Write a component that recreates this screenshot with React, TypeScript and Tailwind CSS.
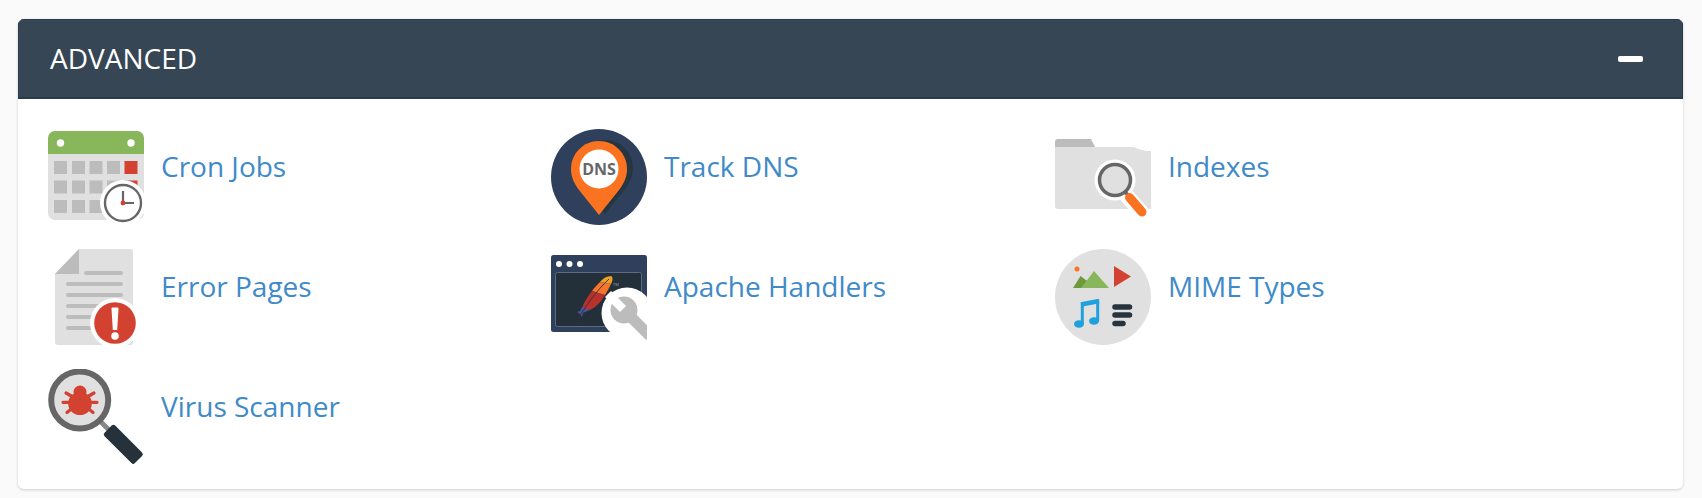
import React from "react";

const Cron = () => (
  <svg width="96" height="96" viewBox="0 0 96 96">
    <path d="M0 25V9a7 7 0 0 1 7-7h82a7 7 0 0 1 7 7v16z" fill="#87b75a" />
    <path d="M0 25h96v59a7 7 0 0 1-7 7H7a7 7 0 0 1-7-7z" fill="#e0e0e0" />
    <circle cx="12.5" cy="14" r="3.7" fill="#fff" />
    <circle cx="83" cy="14" r="3.7" fill="#fff" />
    {[32, 51.5, 71].map((y, r) =>
      [6, 24, 41.5, 59, 76.5].map((x, c) => (
        <rect key={`${r}-${c}`} x={x} y={y} width="13" height="13" fill={c === 4 ? "#d34130" : "#bcbcbc"} />
      ))
    )}
    <circle cx="75" cy="74" r="23" fill="#fff" />
    <circle cx="75" cy="74" r="18" fill="#fff" stroke="#666" strokeWidth="2.4" />
    <path d="M75 62v12h11" fill="none" stroke="#666" strokeWidth="2.2" />
    <circle cx="75" cy="74" r="2.4" fill="#d34130" />
  </svg>
);

const Dns = () => (
  <svg width="96" height="96" viewBox="0 0 96 96">
    <circle cx="48" cy="48" r="48" fill="#2f405c" />
    <path d="M48 12c15.500 0 28 12.500 28 28 0 8-3 14-8 21L48 86 28 61c-5-7-8-13-8-21 0-15.500 12.500-28 28-28z" fill="#263542" transform="translate(6,-1)" />
    <path d="M48 12c15.500 0 28 12.500 28 28 0 8-3 14-8 21L48 86 28 61c-5-7-8-13-8-21 0-15.500 12.500-28 28-28z" fill="#fb7320" />
    <circle cx="48" cy="40" r="19.500" fill="#fff" />
    <text x="48" y="46" textAnchor="middle" fontFamily="'Open Sans', sans-serif" fontWeight="700" fontSize="16" fill="#666">DNS</text>
  </svg>
);

const Indexes = () => (
  <svg width="96" height="96" viewBox="0 0 96 96">
    <path d="M0 20v-7a3 3 0 0 1 3-3h33l4 8v2z" fill="#bcbcbc" />
    <path d="M0 18h78c6 2 10 4 18 4v58H3a3 3 0 0 1-3-3z" fill="#e0e0e0" />
    <circle cx="60" cy="51" r="20.500" fill="#fff" />
    <path d="M72 67l15 17" stroke="#fff" strokeWidth="15" strokeLinecap="round" />
    <circle cx="60" cy="51" r="15.500" fill="#e0e0e0" stroke="#666" strokeWidth="3.500" />
    <path d="M70 63l4 4" stroke="#666" strokeWidth="3.500" />
    <path d="M74.500 68.500L87 83" stroke="#fb7320" strokeWidth="9" strokeLinecap="round" />
  </svg>
);

const ErrorPages = () => (
  <svg width="96" height="96" viewBox="0 0 96 96">
    <path d="M31 0h51a3 3 0 0 1 3 3v90a3 3 0 0 1-3 3H10a3 3 0 0 1-3-3V25z" fill="#e0e0e0" />
    <path d="M31 0v25H7z" fill="#bcbcbc" />
    <path d="M38 24h35M20 35h53M20 46h53M20 57h53M20 68h53M20 79h53" stroke="#bcbcbc" strokeWidth="4" strokeLinecap="round" />
    <circle cx="67" cy="74" r="25" fill="#fff" />
    <circle cx="67" cy="74" r="20.800" fill="#d34130" />
    <path d="M63.500 59.500a1 1 0 0 1 1-1h5a1 1 0 0 1 1 1l-1.300 21.500h-4.400z" fill="#fff" />
    <circle cx="67" cy="87" r="3.800" fill="#fff" />
  </svg>
);

const Apache = () => (
  <svg width="96" height="96" viewBox="0 0 96 96">
    <rect x="0" y="6" width="96" height="77" rx="2.500" fill="#2f405c" />
    <circle cx="8" cy="15" r="3" fill="#fff" />
    <circle cx="18.500" cy="15" r="3" fill="#fff" />
    <circle cx="29" cy="15" r="3" fill="#fff" />
    <rect x="4.500" y="23.500" width="86" height="54" rx="2" fill="#232f39" stroke="#5c6b80" strokeWidth="1" />
    <path d="M60 27c-4 0-8 2-11 6l11 2c2-4 2-7 0-8z" fill="#eda125" />
    <path d="M49 33l11 2c-2 4-4 8-6 11l-13-4c2-3 5-6 8-9z" fill="#f5762a" />
    <path d="M41 42l13 4c-4 7-9 12-15 15l-8-2c2-6 6-12 10-17z" fill="#b7322c" />
    <path d="M31 58l8 3-5 2-2 1-1 4-2-3-3-2 3-1z" fill="#4b549b" />
    <path d="M58 30C45 42 34 58 25 73" fill="none" stroke="#3a2a3c" strokeWidth="0.900" />
    <text x="62" y="37" fontFamily="'Open Sans', sans-serif" fontSize="4" fill="#9aa">TM</text>
    <circle cx="76" cy="64" r="25.500" fill="#fff" />
    <circle cx="73" cy="61" r="13.500" fill="#bcbcbc" />
    <path d="M73 61l26 26" stroke="#bcbcbc" strokeWidth="11" />
    <path d="M57 45l15 15" stroke="#fff" strokeWidth="8.500" />
  </svg>
);

const Mime = () => (
  <svg width="96" height="96" viewBox="0 0 96 96">
    <circle cx="48" cy="48" r="48" fill="#e0e0e0" />
    <circle cx="22" cy="20" r="2.500" fill="#fb7320" />
    <path d="M18 39l7.500-12 8 6L38 39z" fill="#6d9a3e" />
    <path d="M26 39l13-17 15 17z" fill="#87b75a" />
    <path d="M59 17l17 10.500L59 38z" fill="#d34130" />
    <path d="M27.300 75V55.500L42.700 52.500V72" fill="none" stroke="#1ea1dc" strokeWidth="3" />
    <path d="M26 55.500l18-3.500" stroke="#1ea1dc" strokeWidth="4.500" />
    <ellipse cx="24" cy="75" rx="5" ry="3.800" fill="#1ea1dc" />
    <ellipse cx="39" cy="72" rx="5" ry="3.800" fill="#1ea1dc" />
    <path d="M60 58h14.500M60 66h14.500M60 74.500h8" stroke="#263440" strokeWidth="5.500" strokeLinecap="round" />
  </svg>
);

const Virus = () => (
  <svg width="96" height="96" viewBox="0 0 96 96">
    <path d="M52 52l10 10" stroke="#888" strokeWidth="5" />
    <rect x="53.800" y="67.800" width="43" height="15" rx="2.500" fill="#25323c" transform="rotate(45 75.300 75.300)" />
    <circle cx="31.700" cy="31" r="28.500" fill="#e0e0e0" stroke="#666" strokeWidth="6" />
    <path d="M15 33.300h34M18 24l7 4M46 24l-7 4M19 43.500l6-5M45 43.500l-6-5" stroke="#d34130" strokeWidth="3.200" strokeLinecap="round" />
    <ellipse cx="32" cy="34.500" rx="11.800" ry="11.500" fill="#d34130" />
    <circle cx="32" cy="23" r="6.500" fill="#d34130" />
  </svg>
);

const items: [string, () => React.ReactElement][] = [
  ["Cron Jobs", Cron],
  ["Track DNS", Dns],
  ["Indexes", Indexes],
  ["Error Pages", ErrorPages],
  ["Apache Handlers", Apache],
  ["MIME Types", Mime],
  ["Virus Scanner", Virus],
];

export default function App() {
  return (
    <div className="min-h-[498px] bg-[#fafafa] pl-[18px] pr-[19px] pt-[19px] font-['Open_Sans',sans-serif]">
      <section className="h-[470px] overflow-hidden rounded-[6px] bg-white shadow-[0_1px_3px_rgba(0,0,0,0.18)]">
        <header className="flex h-[80px] items-center justify-between border border-b-2 border-[#2b3b49] bg-[#364655] pl-[31px] pr-[39px] text-white">
          <h2 className="pb-[2px] text-[28px] font-normal leading-none">ADVANCED</h2>
          <span className="h-[6px] w-[25px] rounded-[2px] bg-white" />
        </header>
        <div className="grid grid-cols-[503px_504px_503px] auto-rows-[120px] pl-[30px] pt-[30px]">
          {items.map(([label, Icon]) => (
            <a key={label} className="flex items-start gap-[17px]">
              <span className="block h-[96px] w-[96px] shrink-0">
                <Icon />
              </span>
              <span className="pt-[19px] text-[28px] leading-[36px] text-[#408ac9]">{label}</span>
            </a>
          ))}
        </div>
      </section>
    </div>
  );
}
